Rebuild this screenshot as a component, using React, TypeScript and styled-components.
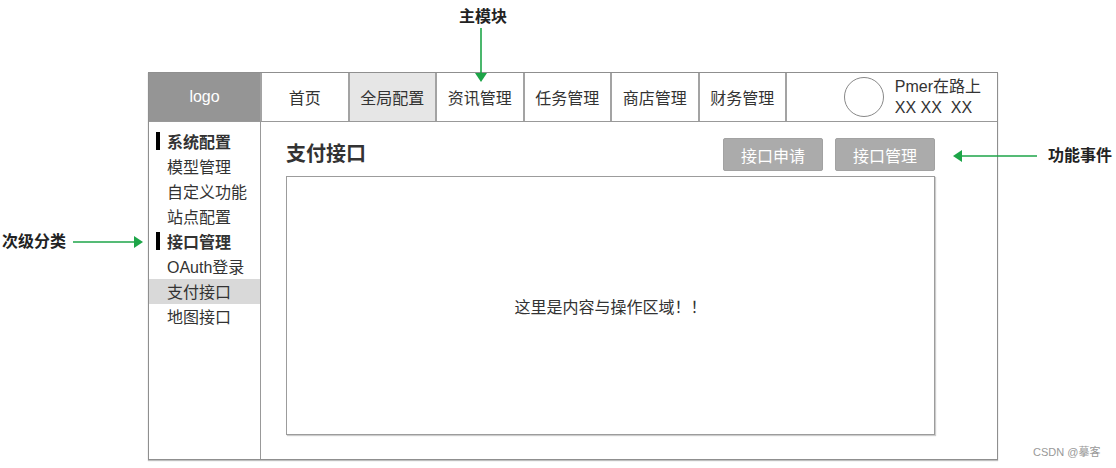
import React from "react";
import styled, { createGlobalStyle } from "styled-components";

const GlobalStyle = createGlobalStyle`
  body {
    margin: 0;
    background: #fff;
    font-family: "Liberation Sans", "Noto Sans CJK SC", sans-serif;
    color: #333;
  }
`;

const Canvas = styled.div`
  position: relative;
  width: 1116px;
  height: 468px;
  box-sizing: border-box;
  padding: 72px 0 0 148px;
  overflow: hidden;
`;

const Frame = styled.div`
  width: 850px;
  height: 388px;
  box-sizing: border-box;
  border: 1px solid #8f8f8f;
  box-shadow: 0 1px 1px rgba(0, 0, 0, 0.25);
  display: flex;
  flex-direction: column;
`;

const Header = styled.div`
  display: flex;
  height: 48px;
  flex-shrink: 0;
  border-bottom: 1px solid #999;
`;

const Logo = styled.div`
  width: 111px;
  background: #959595;
  color: #fff;
  font-size: 16px;
  display: flex;
  align-items: center;
  justify-content: center;
  border-right: 2px solid #a3a3a3;
`;

const NavItem = styled.div<{ $active?: boolean }>`
  width: 85.5px;
  background: ${({ $active }) => ($active ? "#e6e6e6" : "#fff")};
  border-right: 2px solid #a3a3a3;
  font-size: 16px;
  display: flex;
  align-items: center;
  justify-content: center;
`;

const User = styled.div`
  flex: 1;
  display: flex;
  align-items: center;
  justify-content: flex-end;
  gap: 11px;
  padding-right: 16px;
`;

const Avatar = styled.div`
  width: 38px;
  height: 38px;
  border: 1px solid #888;
  border-radius: 50%;
`;

const UserText = styled.div`
  font-size: 16px;
  line-height: 21px;
  white-space: pre;
`;

const Body = styled.div`
  flex: 1;
  display: flex;
  min-height: 0;
`;

const Sidebar = styled.div`
  width: 111px;
  border-right: 1px solid #999;
  padding-top: 6px;
`;

const SideItem = styled.div<{ $heading?: boolean; $active?: boolean }>`
  height: 25.1px;
  display: flex;
  align-items: center;
  font-size: 16px;
  font-weight: ${({ $heading }) => ($heading ? 700 : 400)};
  padding-left: ${({ $heading }) => ($heading ? "7px" : "18px")};
  background: ${({ $active }) => ($active ? "#d9d9d9" : "transparent")};
  &::before {
    content: "";
    display: ${({ $heading }) => ($heading ? "block" : "none")};
    width: 4px;
    height: 18px;
    background: #000;
    margin-right: 7px;
  }
`;

const Main = styled.div`
  flex: 1;
  display: flex;
  flex-direction: column;
  padding: 16px 62px 24px 25px;
`;

const TitleRow = styled.div`
  display: flex;
  align-items: center;
  height: 33px;
`;

const Title = styled.div`
  flex: 1;
  font-size: 20px;
  font-weight: 700;
  margin-top: -4px;
`;

const Actions = styled.div`
  display: flex;
  gap: 12px;
`;

const ActionButton = styled.div`
  width: 98px;
  height: 31px;
  background: #ababab;
  border: 1px solid #a2a2a2;
  border-radius: 2px;
  color: #fff;
  font-size: 16px;
  display: flex;
  align-items: center;
  justify-content: center;
`;

const ContentBox = styled.div`
  flex: 1;
  margin-top: 5px;
  border: 1px solid #9c9c9c;
  box-shadow: 1px 1px 1px rgba(0, 0, 0, 0.2);
  display: flex;
  align-items: center;
  justify-content: center;
  font-size: 16px;
`;

const Note = styled.div<{ $x: number; $y: number }>`
  position: absolute;
  left: ${({ $x }) => $x}px;
  top: ${({ $y }) => $y}px;
  font-size: 16px;
  font-weight: 700;
  line-height: 20px;
  color: #222;
`;

const Arrow = styled.svg<{ $x: number; $y: number }>`
  position: absolute;
  left: ${({ $x }) => $x}px;
  top: ${({ $y }) => $y}px;
`;

const Watermark = styled.div`
  position: absolute;
  left: 1033px;
  top: 445px;
  font-size: 11px;
  line-height: 14px;
  color: #999;
`;

const GREEN = "#1da548";

export default function App() {
  return (
    <Canvas>
      <GlobalStyle />
      <Frame>
        <Header>
          <Logo>logo</Logo>
          <NavItem>首页</NavItem>
          <NavItem $active>全局配置</NavItem>
          <NavItem>资讯管理</NavItem>
          <NavItem>任务管理</NavItem>
          <NavItem>商店管理</NavItem>
          <NavItem>财务管理</NavItem>
          <User>
            <Avatar />
            <UserText>{"Pmer在路上\nXX XX  XX"}</UserText>
          </User>
        </Header>
        <Body>
          <Sidebar>
            <SideItem $heading>系统配置</SideItem>
            <SideItem>模型管理</SideItem>
            <SideItem>自定义功能</SideItem>
            <SideItem>站点配置</SideItem>
            <SideItem $heading>接口管理</SideItem>
            <SideItem>OAuth登录</SideItem>
            <SideItem $active>支付接口</SideItem>
            <SideItem>地图接口</SideItem>
          </Sidebar>
          <Main>
            <TitleRow>
              <Title>支付接口</Title>
              <Actions>
                <ActionButton>接口申请</ActionButton>
                <ActionButton>接口管理</ActionButton>
              </Actions>
            </TitleRow>
            <ContentBox>这里是内容与操作区域！！</ContentBox>
          </Main>
        </Body>
      </Frame>

      <Note $x={459} $y={7}>主模块</Note>
      <Arrow $x={474} $y={28} width={14} height={56}>
        <line x1={7} y1={0} x2={7} y2={46} stroke={GREEN} strokeWidth={1.6} />
        <polygon points="1,45 13,45 7,54" fill={GREEN} />
      </Arrow>

      <Note $x={1048} $y={146}>功能事件</Note>
      <Arrow $x={951} $y={149} width={86} height={14}>
        <line x1={10} y1={7} x2={86} y2={7} stroke={GREEN} strokeWidth={1.6} />
        <polygon points="2,7 11,1 11,13" fill={GREEN} />
      </Arrow>

      <Note $x={2} $y={232}>次级分类</Note>
      <Arrow $x={73} $y={235} width={72} height={14}>
        <line x1={0} y1={7} x2={62} y2={7} stroke={GREEN} strokeWidth={1.6} />
        <polygon points="70,7 61,1 61,13" fill={GREEN} />
      </Arrow>

      <Watermark>CSDN @摹客</Watermark>
    </Canvas>
  );
}
